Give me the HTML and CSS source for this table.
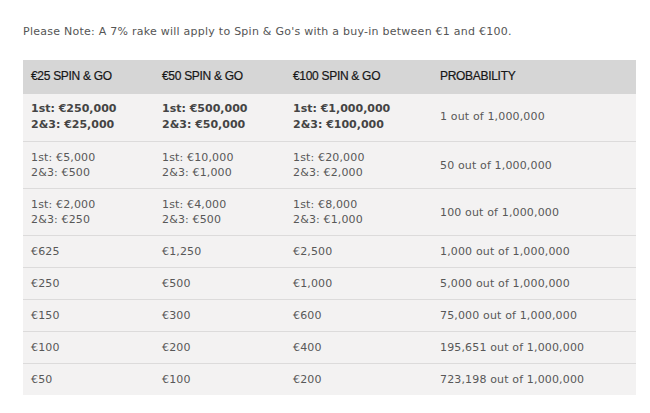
FILE: index.html
```html
<!DOCTYPE html>
<html>
<head>
<meta charset="utf-8">
<link rel="stylesheet" href="styles.css">
</head>
<body>
<div class="page">
  <p class="note">Please Note: A 7% rake will apply to Spin &amp; Go's with a buy-in between €1 and €100.</p>
  <table class="prizes">
    <colgroup>
      <col class="c1"><col class="c2"><col class="c3"><col class="c4">
    </colgroup>
    <thead>
      <tr><th>€25 SPIN &amp; GO</th><th>€50 SPIN &amp; GO</th><th>€100 SPIN &amp; GO</th><th>PROBABILITY</th></tr>
    </thead>
    <tbody>
      <tr class="top">
        <td>1st: €250,000<br>2&amp;3: €25,000</td>
        <td>1st: €500,000<br>2&amp;3: €50,000</td>
        <td>1st: €1,000,000<br>2&amp;3: €100,000</td>
        <td class="prob">1 out of 1,000,000</td>
      </tr>
      <tr>
        <td>1st: €5,000<br>2&amp;3: €500</td>
        <td>1st: €10,000<br>2&amp;3: €1,000</td>
        <td>1st: €20,000<br>2&amp;3: €2,000</td>
        <td>50 out of 1,000,000</td>
      </tr>
      <tr>
        <td>1st: €2,000<br>2&amp;3: €250</td>
        <td>1st: €4,000<br>2&amp;3: €500</td>
        <td>1st: €8,000<br>2&amp;3: €1,000</td>
        <td>100 out of 1,000,000</td>
      </tr>
      <tr><td>€625</td><td>€1,250</td><td>€2,500</td><td>1,000 out of 1,000,000</td></tr>
      <tr><td>€250</td><td>€500</td><td>€1,000</td><td>5,000 out of 1,000,000</td></tr>
      <tr><td>€150</td><td>€300</td><td>€600</td><td>75,000 out of 1,000,000</td></tr>
      <tr><td>€100</td><td>€200</td><td>€400</td><td>195,651 out of 1,000,000</td></tr>
      <tr><td>€50</td><td>€100</td><td>€200</td><td>723,198 out of 1,000,000</td></tr>
    </tbody>
  </table>
</div>
</body>
</html>
```
FILE: styles.css
```css
html, body {
  margin: 0;
  padding: 0;
  background: #ffffff;
}
.page {
  padding: 25px 14px 0 23px;
  font-family: "DejaVu Sans", Verdana, sans-serif;
  font-size: 11px;
  color: #555555;
}
.note {
  margin: 0 0 21px 0;
  line-height: 14px;
  letter-spacing: 0.25px;
}
.prizes {
  border-collapse: collapse;
  width: 613px;
  table-layout: fixed;
  background: #f3f2f2;
}
.c1 { width: 131px; }
.c2 { width: 131px; }
.c3 { width: 147px; }
.c4 { width: 204px; }
.prizes th {
  background: #d6d6d6;
  font-family: "Liberation Sans", Arial, sans-serif;
  font-size: 12px;
  font-weight: normal;
  color: #161616;
  text-align: left;
  padding: 8px 8px 10px 8px;
  line-height: 16px;
  height: 16px;
  letter-spacing: -0.3px;
  -webkit-text-stroke: 0.2px #161616;
}
.prizes td {
  padding: 8px 8px;
  line-height: 15px;
  height: 15px;
  vertical-align: middle;
  border-top: 1px solid #dcdbdb;
  color: #585858;
  letter-spacing: 0.15px;
}
.prizes tbody tr:first-child td {
  border-top: none;
}
.prizes tr.top td {
  font-weight: bold;
  color: #444444;
  line-height: 16px;
  padding: 7px 8px 8px 8px;
  letter-spacing: 0;
}
.prizes tr.top td.prob {
  font-weight: normal;
  color: #585858;
  letter-spacing: 0.15px;
}
```
